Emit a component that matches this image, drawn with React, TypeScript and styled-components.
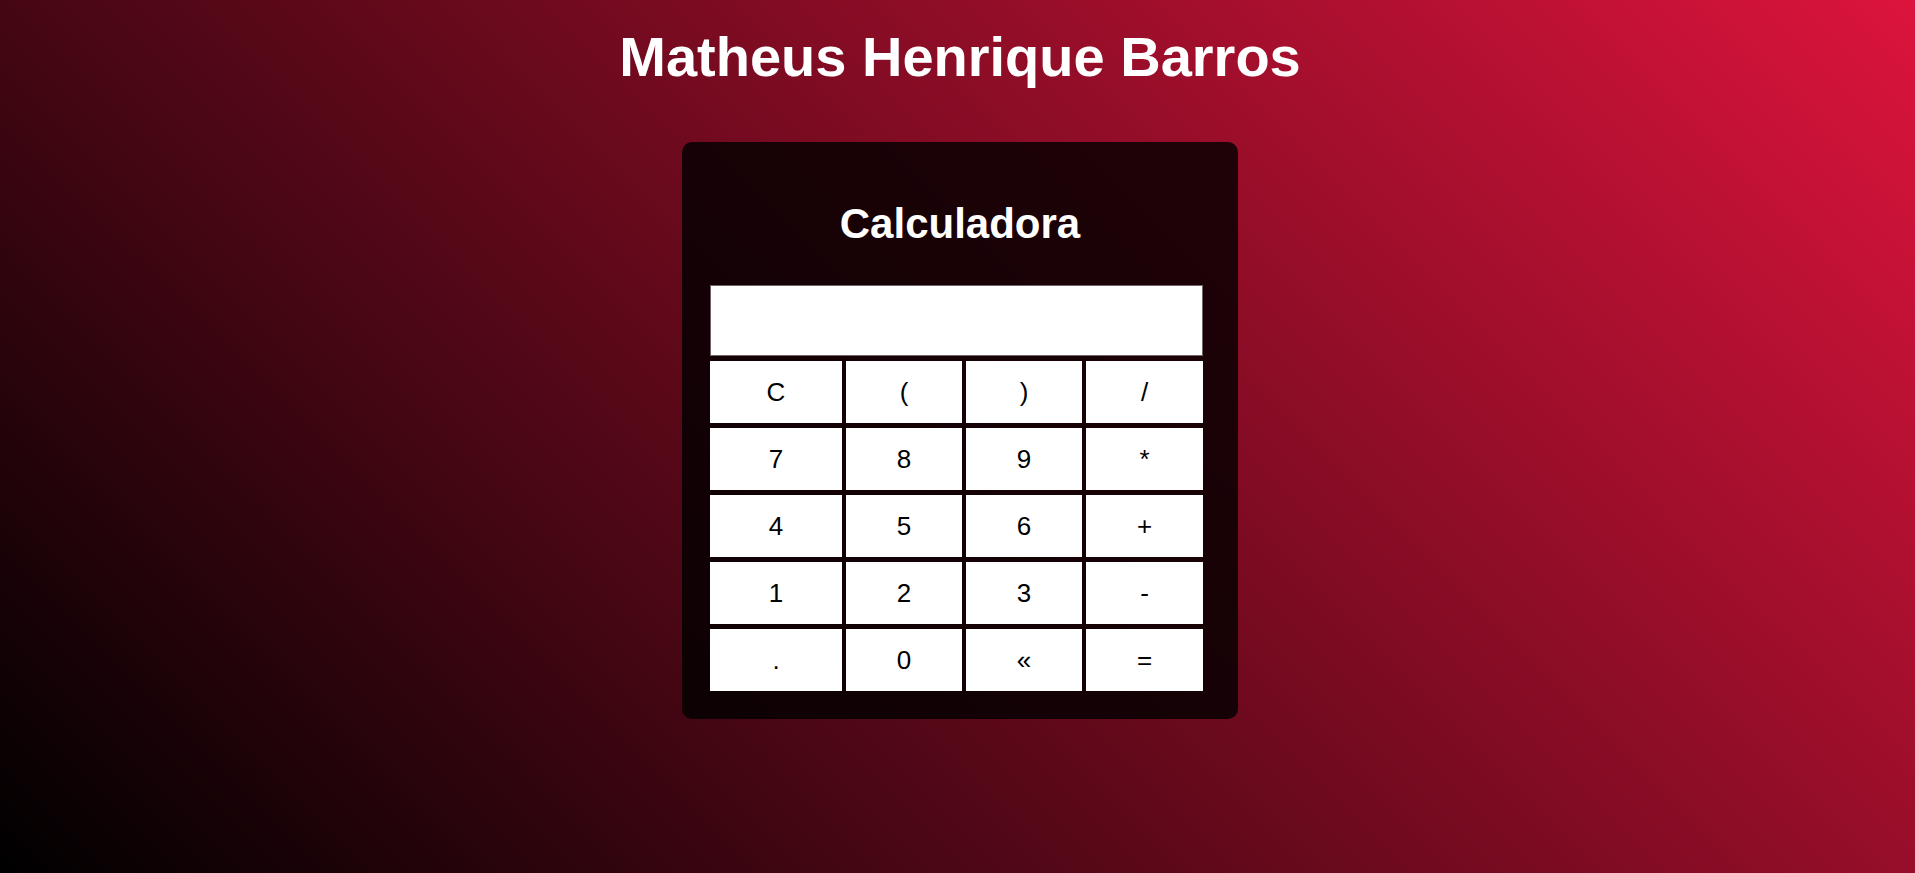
import React from "react";
import styled, { createGlobalStyle } from "styled-components";

const GlobalStyle = createGlobalStyle`
  html, body {
    margin: 0;
    padding: 0;
  }
  body {
    font-family: "Liberation Sans", Arial, sans-serif;
    min-height: 873px;
    background: linear-gradient(45deg, #000000, #dc143c);
    background-attachment: fixed;
  }
`;

const Page = styled.main`
  min-height: 873px;
  display: flex;
  flex-direction: column;
  align-items: center;
  padding-left: 5px;
  box-sizing: border-box;
`;

const Heading = styled.h1`
  margin: 25px 0 0;
  font-size: 56px;
  line-height: 64px;
  font-weight: 700;
  color: #ffffff;
`;

const Card = styled.section`
  margin-top: 53px;
  width: 556px;
  box-sizing: border-box;
  padding: 0 35px 28px 28px;
  background: rgba(0, 0, 0, 0.8);
  border-radius: 10px;
  display: flex;
  flex-direction: column;
`;

const CardTitle = styled.h2`
  margin: 58px 0 37px;
  font-size: 42px;
  line-height: 48px;
  font-weight: 700;
  color: #ffffff;
  text-align: center;
  padding-left: 7px;
`;

const Keypad = styled.div`
  display: grid;
  grid-template-columns: 132px 116px 116px 117px;
  column-gap: 4px;
  row-gap: 5px;
  width: 493px;
`;

const Display = styled.input`
  grid-column: 1 / -1;
  height: 71px;
  box-sizing: border-box;
  border: 1px solid #6f6466;
  background: #ffffff;
  margin: 0;
  padding: 0 10px;
  font-family: "Liberation Sans", Arial, sans-serif;
  font-size: 26px;
  outline: none;
`;

const Key = styled.button`
  height: 62px;
  margin: 0;
  padding: 0;
  border: none;
  background: #ffffff;
  color: #000000;
  font-family: "Liberation Sans", Arial, sans-serif;
  font-size: 26px;
  display: flex;
  align-items: center;
  justify-content: center;
  cursor: pointer;
`;

const keys = [
  "C", "(", ")", "/",
  "7", "8", "9", "*",
  "4", "5", "6", "+",
  "1", "2", "3", "-",
  ".", "0", "«", "=",
];

export default function App() {
  return (
    <>
      <GlobalStyle />
      <Page>
        <Heading>Matheus Henrique Barros</Heading>
        <Card>
          <CardTitle>Calculadora</CardTitle>
          <Keypad>
            <Display type="text" readOnly value="" />
            {keys.map((k) => (
              <Key key={k} type="button">
                {k}
              </Key>
            ))}
          </Keypad>
        </Card>
      </Page>
    </>
  );
}
